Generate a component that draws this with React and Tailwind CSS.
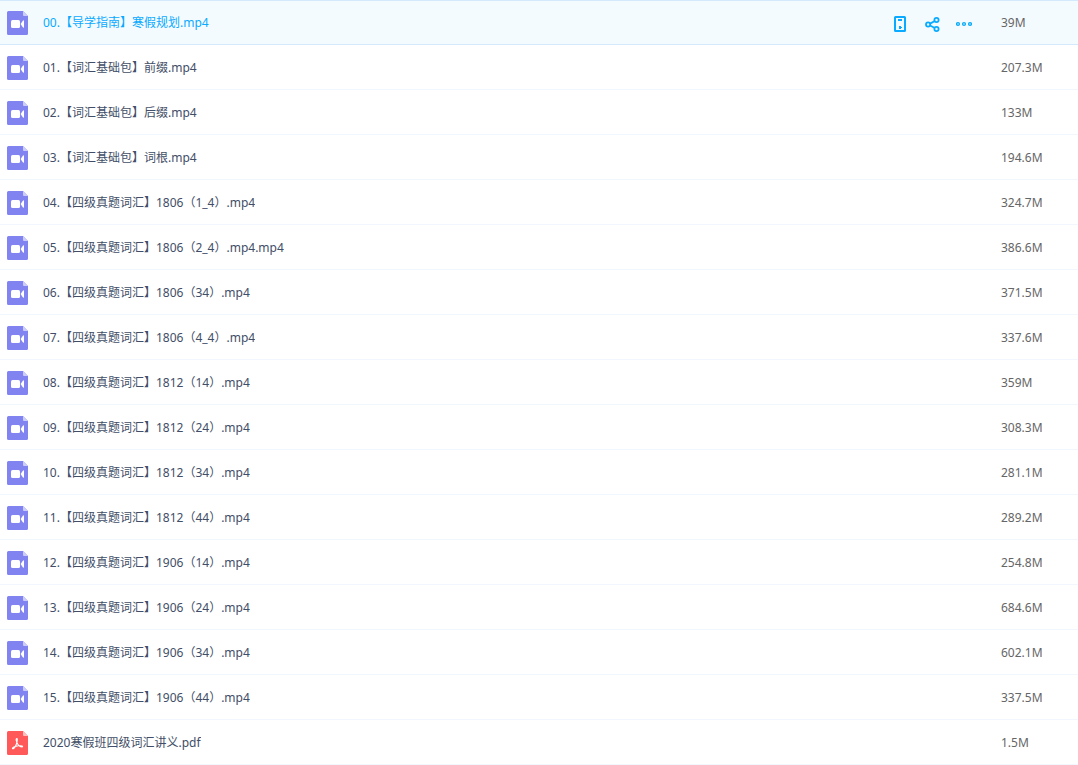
import React from "react";

const files = [
  { name: "00.【导学指南】寒假规划.mp4", size: "39M", type: "video", active: true },
  { name: "01.【词汇基础包】前缀.mp4", size: "207.3M", type: "video" },
  { name: "02.【词汇基础包】后缀.mp4", size: "133M", type: "video" },
  { name: "03.【词汇基础包】词根.mp4", size: "194.6M", type: "video" },
  { name: "04.【四级真题词汇】1806（1_4）.mp4", size: "324.7M", type: "video" },
  { name: "05.【四级真题词汇】1806（2_4）.mp4.mp4", size: "386.6M", type: "video" },
  { name: "06.【四级真题词汇】1806（34）.mp4", size: "371.5M", type: "video" },
  { name: "07.【四级真题词汇】1806（4_4）.mp4", size: "337.6M", type: "video" },
  { name: "08.【四级真题词汇】1812（14）.mp4", size: "359M", type: "video" },
  { name: "09.【四级真题词汇】1812（24）.mp4", size: "308.3M", type: "video" },
  { name: "10.【四级真题词汇】1812（34）.mp4", size: "281.1M", type: "video" },
  { name: "11.【四级真题词汇】1812（44）.mp4", size: "289.2M", type: "video" },
  { name: "12.【四级真题词汇】1906（14）.mp4", size: "254.8M", type: "video" },
  { name: "13.【四级真题词汇】1906（24）.mp4", size: "684.6M", type: "video" },
  { name: "14.【四级真题词汇】1906（34）.mp4", size: "602.1M", type: "video" },
  { name: "15.【四级真题词汇】1906（44）.mp4", size: "337.5M", type: "video" },
  { name: "2020寒假班四级词汇讲义.pdf", size: "1.5M", type: "pdf" },
];

function FileShape({ fill, fold, children }) {
  return (
    <svg width="21" height="24" viewBox="0 0 21 24" className="block" aria-hidden="true">
      <path d="M1.5 0H16l5 5v17.5a1.5 1.5 0 0 1-1.5 1.5h-18A1.5 1.5 0 0 1 0 22.5v-21A1.5 1.5 0 0 1 1.5 0z" fill={fill} />
      <path d="M16 0l5 5h-4a1 1 0 0 1-1-1z" fill={fold} />
      {children}
    </svg>
  );
}

function VideoIcon() {
  return (
    <FileShape fill="#8183f1" fold="#cdcdf9">
      <rect x="4" y="9" width="9" height="8" rx="1.5" fill="#fff" />
      <path d="M13.6 13L16 9.6q1-.8 1 .4v6q0 1.2-1 .4z" fill="#fff" />
    </FileShape>
  );
}

function PdfIcon() {
  return (
    <FileShape fill="#ff5959" fold="#ffc0c0">
      <path
        d="M9.8 7.5c-1.2 0-.6 3.5 1 5.7 1.3 1.8 3 3 4.3 2.8 1.5-.4-.2-1.7-3.6-1.2-2.8.4-5.5 1.5-6 2.4-.4 1 1.3.8 2.7-1.6 1.6-2.6 2.8-8.1 1.6-8.1z"
        fill="none"
        stroke="#fff"
        strokeWidth="1.1"
        strokeLinejoin="round"
      />
    </FileShape>
  );
}

function PhoneIcon() {
  return (
    <svg width="16" height="16" viewBox="0 0 16 16" className="block" aria-hidden="true">
      <rect x="3" y="1" width="10" height="14" rx="0.5" fill="none" stroke="#09aaff" strokeWidth="2" />
      <path d="M6 3h4v2H6zM7 10h2v1h1v1H9v1H7z" fill="#09aaff" />
    </svg>
  );
}

function ShareIcon() {
  return (
    <svg width="16" height="16" viewBox="0 0 16 16" className="block" fill="none" stroke="#09aaff" strokeWidth="1.8" aria-hidden="true">
      <circle cx="4.1" cy="8.5" r="2.1" />
      <circle cx="12.5" cy="4" r="2.1" />
      <circle cx="12.5" cy="13" r="2.1" />
      <path d="M6.1 7.6l4.7-2.6M6.1 9.5l4.7 2.5" />
    </svg>
  );
}

function MoreIcon() {
  return (
    <svg width="16" height="16" viewBox="0 0 16 16" className="block" fill="none" stroke="#09aaff" strokeWidth="1.4" aria-hidden="true">
      <circle cx="2" cy="8" r="1.4" />
      <circle cx="8" cy="8" r="1.4" />
      <circle cx="14" cy="8" r="1.4" />
    </svg>
  );
}

function RowActions() {
  return (
    <div className="flex shrink-0 items-center gap-4 pt-0.5">
      <button type="button" aria-label="发送到手机"><PhoneIcon /></button>
      <button type="button" aria-label="分享"><ShareIcon /></button>
      <button type="button" aria-label="更多"><MoreIcon /></button>
    </div>
  );
}

function FileRow({ file }) {
  const cell = file.active
    ? "h-[45px] border-y border-[#d4e9fb] bg-[#f4fbff]"
    : "h-[45px] border-y border-t-transparent border-b-[#f2f6fd]";
  return (
    <tr>
      <td className={`${cell} pt-2.5 pl-[7px] align-top`}>
        {file.type === "pdf" ? <PdfIcon /> : <VideoIcon />}
      </td>
      <td className={`${cell} pr-[29px]`}>
        <div className="flex items-center justify-between gap-4">
          <a href="#" className={`truncate ${file.active ? "text-[#09aaff]" : "text-[#424e67]"}`}>
            {file.name}
          </a>
          {file.active && <RowActions />}
        </div>
      </td>
      <td className={`${cell} text-[#666666]`}>{file.size}</td>
    </tr>
  );
}

export default function App() {
  return (
    <main className="bg-white font-['Noto_Sans','Noto_Sans_CJK_SC',sans-serif] text-[12px] leading-4">
      <table aria-label="文件列表" className="w-full table-fixed border-separate border-spacing-0">
        <colgroup>
          <col className="w-[43px]" />
          <col />
          <col className="w-[77px]" />
        </colgroup>
        <tbody>
          {files.map((file) => (
            <FileRow key={file.name} file={file} />
          ))}
        </tbody>
      </table>
    </main>
  );
}
